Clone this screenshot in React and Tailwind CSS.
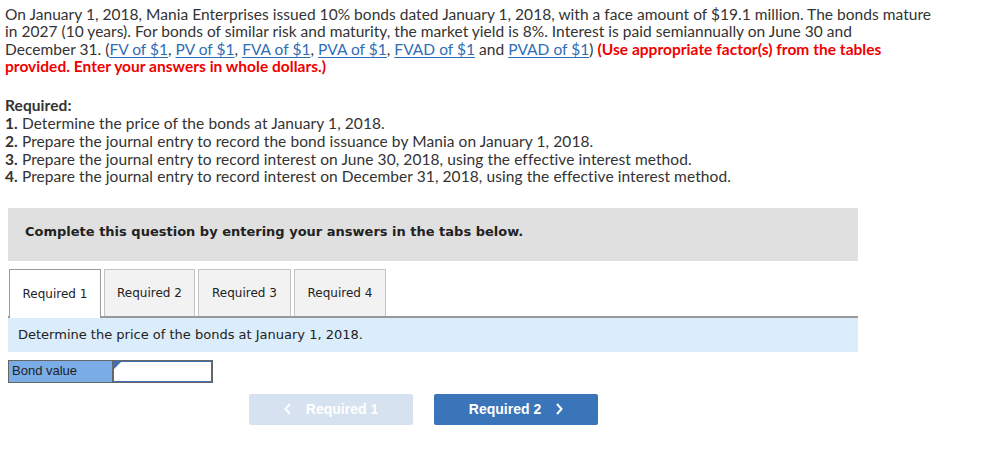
import React from "react";

const L = ({ children }) => (
  <a className="text-[#2f6db5] underline decoration-1 underline-offset-2">{children}</a>
);

export default function App() {
  return (
    <div className="bg-white w-[998px] h-[469px] overflow-hidden text-[#333]">
      <div className="pl-[5px] pt-[6px] font-['Lato',sans-serif] text-[15.5px] tracking-[0.03px] leading-[17.4px] whitespace-nowrap">
        <div>On January 1, 2018, Mania Enterprises issued 10% bonds dated January 1, 2018, with a face amount of $19.1 million. The bonds mature</div>
        <div>in 2027 (10 years). For bonds of similar risk and maturity, the market yield is 8%. Interest is paid semiannually on June 30 and</div>
        <div>
          December 31. (<L>FV of $1</L>, <L>PV of $1</L>, <L>FVA of $1</L>, <L>PVA of $1</L>, <L>FVAD of $1</L> and <L>PVAD of $1</L>){" "}
          <span className="font-bold text-[#f00000]">(Use appropriate factor(s) from the tables</span>
        </div>
        <div className="font-bold text-[#f00000]">provided. Enter your answers in whole dollars.)</div>
      </div>

      <div className="pl-[5px] mt-[19px] font-['Lato',sans-serif] text-[15.5px] tracking-[0.08px] leading-[18px] whitespace-nowrap">
        <div className="font-bold pt-[1px]">Required:</div>
        <div><b>1.</b> Determine the price of the bonds at January 1, 2018.</div>
        <div><b>2.</b> Prepare the journal entry to record the bond issuance by Mania on January 1, 2018.</div>
        <div><b>3.</b> Prepare the journal entry to record interest on June 30, 2018, using the effective interest method.</div>
        <div className="-mt-[1px]"><b>4.</b> Prepare the journal entry to record interest on December 31, 2018, using the effective interest method.</div>
      </div>

      <div className="ml-[8px] mt-[23px] w-[850px] font-['DejaVu_Sans',Verdana,sans-serif]">
        <div className="h-[53px] bg-[#e0e0e0] flex items-start pt-[14px] pl-[17px] text-[13px] font-bold text-[#222]">
          Complete this question by entering your answers in the tabs below.
        </div>

        <div className="mt-[8px] flex items-end gap-[3px] pl-[1px] text-[12px] text-[#222]">
          <div className="w-[92px] h-[49px] bg-white border border-[#999] border-b-0 flex items-center justify-center relative z-10 -mb-[2px]">
            Required 1
          </div>
          <div className="w-[91px] h-[47px] bg-[#f2f2f2] border border-[#c4c4c4] border-b-0 flex items-center justify-center">
            Required 2
          </div>
          <div className="w-[93px] h-[47px] bg-[#f2f2f2] border border-[#c4c4c4] border-b-0 flex items-center justify-center">
            Required 3
          </div>
          <div className="w-[92px] h-[47px] bg-[#f2f2f2] border border-[#c4c4c4] border-b-0 flex items-center justify-center">
            Required 4
          </div>
        </div>
        <div className="border-t-2 border-[#999] h-[36px] bg-[#dbecfa] flex items-center pl-[10px] text-[13px] text-[#222]">
          Determine the price of the bonds at January 1, 2018.
        </div>

        <div className="mt-[8px] flex w-[205px] h-[23px] border border-[#666] font-['Liberation_Sans',Arial,sans-serif] text-[13px]">
          <div className="w-[104px] bg-[#7aace6] border-r border-[#666] flex items-center pl-[3px] text-[#222]">
            Bond value
          </div>
          <div className="flex-1 bg-white border border-[#3f6fae] relative">
            <svg className="absolute left-0 top-0" width="7" height="7" viewBox="0 0 7 7">
              <polygon points="0,0 7,0 0,7" fill="#3f6fae" />
            </svg>
          </div>
        </div>

        <div className="mt-[11px] flex gap-[21px] pl-[241px] font-['Liberation_Sans',Arial,sans-serif] text-[14px] font-bold text-white">
          <div className="w-[164px] h-[31px] rounded-[2px] bg-[#d6e2f0] flex items-center justify-center gap-[14px]">
            <svg width="8" height="12" viewBox="0 0 8 12"><path d="M6 1 L1.5 6 L6 11" stroke="white" strokeWidth="2" fill="none" /></svg>
            <span>Required 1</span>
          </div>
          <div className="w-[164px] h-[31px] rounded-[2px] bg-[#3a75b9] flex items-center justify-center gap-[14px]">
            <span>Required 2</span>
            <svg width="8" height="12" viewBox="0 0 8 12"><path d="M2 1 L6.5 6 L2 11" stroke="white" strokeWidth="2" fill="none" /></svg>
          </div>
        </div>
      </div>
    </div>
  );
}
